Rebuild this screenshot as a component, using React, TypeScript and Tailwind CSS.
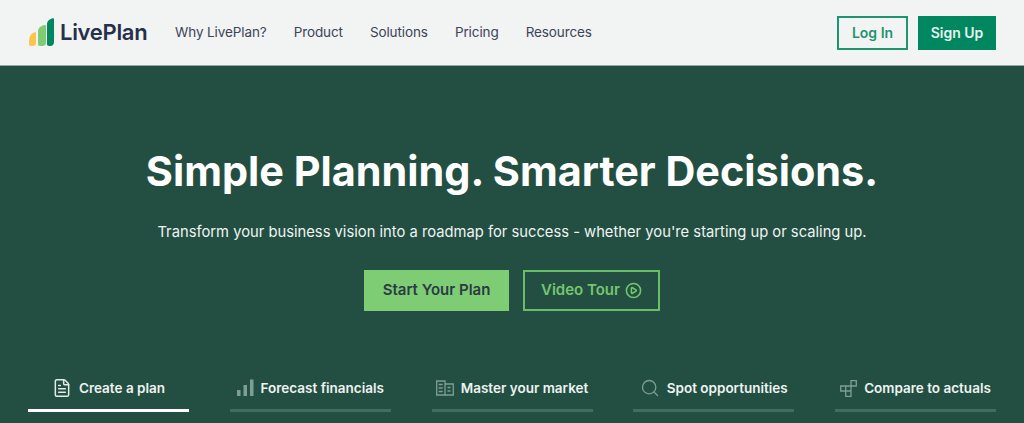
import React from 'react';
import { FileText, Search, CirclePlay } from 'lucide-react';

const navItems = ['Why LivePlan?', 'Product', 'Solutions', 'Pricing', 'Resources'];

const BarsIcon = () => (
  <svg width="17" height="18" viewBox="0 0 17 18" className="text-[#7f9e93]" fill="currentColor">
    <rect x="0" y="11" width="3.5" height="6" />
    <rect x="6.5" y="6" width="3.5" height="11" />
    <rect x="13" y="0.5" width="3.5" height="16.5" />
  </svg>
);

const MarketIcon = () => (
  <svg width="18" height="16" viewBox="0 0 18 16" className="text-[#7f9e93]" fill="none" stroke="currentColor" strokeWidth="1.3">
    <path d="M.7 1h8.3v14H.7zM9 4h8.3v11H9zM2.7 4.5h4M2.7 8h4M2.7 11.5h4M11.5 7.5h3M11.5 11h3" />
  </svg>
);

const CompareIcon = () => (
  <svg width="17" height="17" viewBox="0 0 17 17" className="text-[#7f9e93]" fill="none" stroke="currentColor" strokeWidth="1.3">
    <path d="M11 .7h5.3v5.3H11zM5.7 6h5.3v5H5.7zM.7 6h5v5h-5zM5.7 11h5.3v5.3H5.7z" />
  </svg>
);

const tabs = [
  { label: 'Create a plan', icon: <FileText size={20} strokeWidth={1.8} className="text-[#e4ebe8]" />, active: true },
  { label: 'Forecast financials', icon: <BarsIcon />, active: false },
  { label: 'Master your market', icon: <MarketIcon />, active: false },
  { label: 'Spot opportunities', icon: <Search size={20} strokeWidth={1.6} className="text-[#7f9e93]" />, active: false },
  { label: 'Compare to actuals', icon: <CompareIcon />, active: false },
];

const Logo = () => (
  <svg width="25" height="29" viewBox="0 0 25 29">
    <path d="M0 26 C0 21 .5 18 2 16.5 C3.5 15 5.5 14 7 14 L7 25 C7 27 5.5 28 3.5 28 L2 28 C.7 28 0 27.2 0 26Z" fill="#fcc44f" />
    <path d="M9 26 L9 13 C9 10 11 8.5 15 7 C16 6.7 17 7 17 8 L17 25 C17 27 15.5 28 13.5 28 L11 28 C9.7 28 9 27.2 9 26Z" fill="#7ecd75" />
    <path d="M18 26 L18 6 C18 3 20 1.5 23.5 .3 C24.5 0 25 .5 25 1.5 L25 24 C25 26.5 23.5 28 21 28 L20 28 C18.7 28 18 27.2 18 26Z" fill="#00875f" />
  </svg>
);

export default function App() {
  return (
    <div className="w-[1024px] h-[423px] overflow-hidden font-['Inter',sans-serif]">
      <header className="h-[66px] bg-[#f2f3f3] border-b border-[#9aa5a0] flex items-center pl-[29px] pr-[28px]">
        <div className="flex items-center gap-[6px] w-[146px]">
          <Logo />
          <span className="text-[22px] font-semibold text-[#25304a] tracking-[-0.3px]">LivePlan</span>
        </div>
        <nav className="flex items-center gap-[27px] text-[13.5px] tracking-[-0.1px] text-[#3b4558]">
          {navItems.map(item => (
            <a key={item}>{item}</a>
          ))}
        </nav>
        <div className="ml-auto flex items-center gap-[10px] text-[14px] font-semibold">
          <button className="w-[71px] h-[34px] border-2 border-[#1f9470] text-[#1f9470]">Log In</button>
          <button className="w-[78px] h-[34px] bg-[#00875f] text-[#e8f3ef]">Sign Up</button>
        </div>
      </header>

      <main className="h-[357px] bg-[#234f42] flex flex-col items-center">
        <h1 className="mt-[78px] text-[41.4px] leading-[54px] font-bold text-white">Simple Planning. Smarter Decisions.</h1>
        <p className="mt-[22px] text-[14.75px] leading-[24px] text-[#f0f4f2]">
          Transform your business vision into a roadmap for success - whether you're starting up or scaling up.
        </p>
        <div className="mt-[26px] flex items-center gap-[14px] text-[15px] font-semibold">
          <button className="w-[145px] h-[41px] bg-[#7ecd75] text-[#2b3b45]">Start Your Plan</button>
          <button className="w-[137px] h-[41px] border-2 border-[#6cbd67] text-[#75c66e] flex items-center justify-center gap-[5px]">
            Video Tour
            <CirclePlay size={17} strokeWidth={2.2} />
          </button>
        </div>
        <div className="mt-[65px] w-full pl-[28px] pr-[28px] flex justify-between">
          {tabs.map(tab => (
            <div key={tab.label} className="w-[161px]">
              <div className="h-[24px] flex items-center justify-center gap-[7px] text-[13.5px] font-semibold text-[#eef3f1]">
                {tab.icon}
                <span>{tab.label}</span>
              </div>
              <div className={`mt-[9px] h-[3px] ${tab.active ? 'bg-white' : 'bg-[#456b5f]'}`} />
            </div>
          ))}
        </div>
      </main>
    </div>
  );
}
